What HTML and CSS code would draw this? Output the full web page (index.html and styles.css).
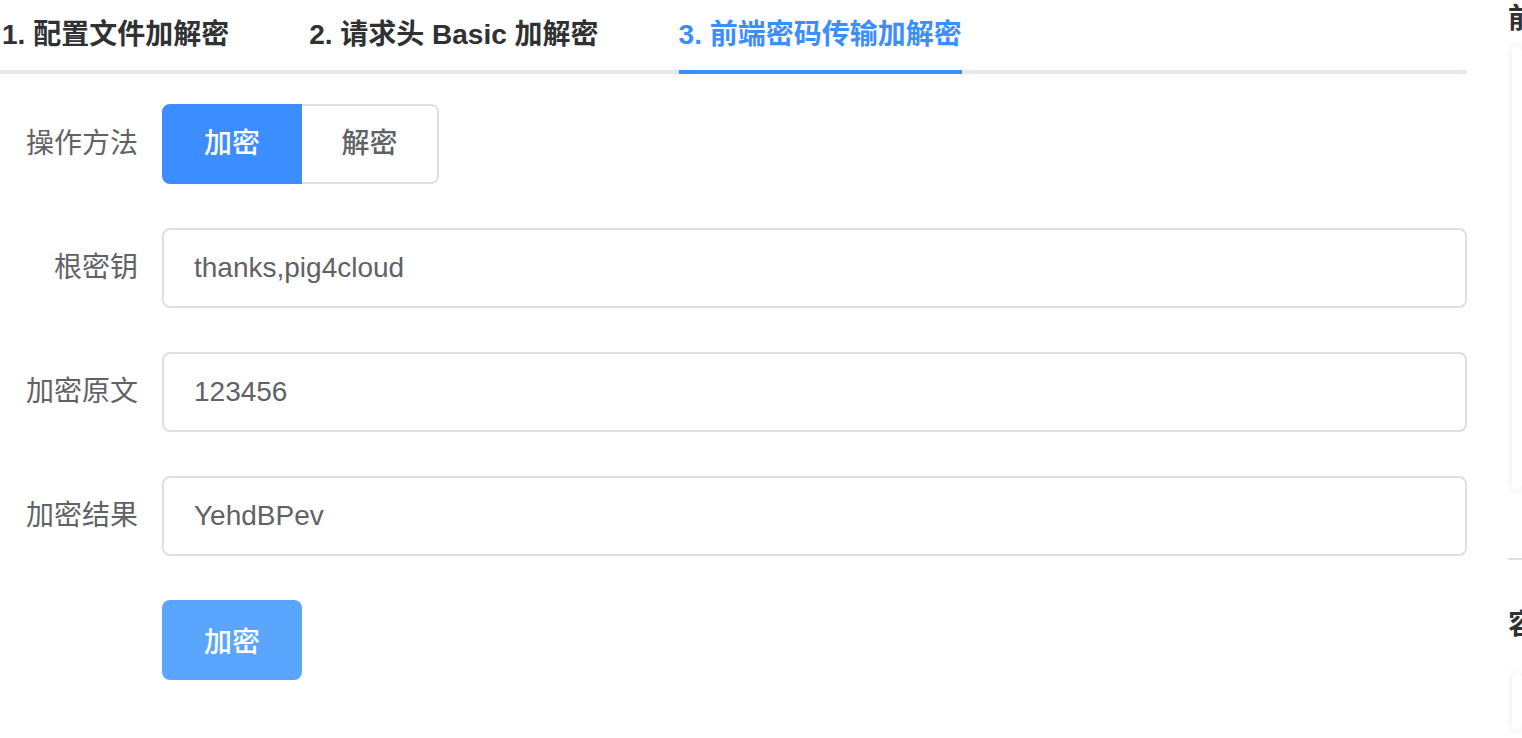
FILE: index.html
```html
<!DOCTYPE html>
<html lang="zh-CN">
<head>
<meta charset="utf-8">
<title>前端密码传输加解密</title>
<link rel="stylesheet" href="styles.css">
</head>
<body>
<div class="page">
  <div class="main">
    <div class="tabs">
      <div class="tab"><span class="tab-label">1. 配置文件加解密</span></div>
      <div class="tab"><span class="tab-label">2. 请求头 Basic 加解密</span></div>
      <div class="tab active"><span class="tab-label">3. 前端密码传输加解密</span></div>
    </div>
    <form class="form">
      <div class="form-item">
        <label class="label">操作方法</label>
        <div class="control">
          <div class="radio-group">
            <span class="radio-btn checked">加密</span>
            <span class="radio-btn">解密</span>
          </div>
        </div>
      </div>
      <div class="form-item">
        <label class="label">根密钥</label>
        <div class="control"><input class="input" type="text" value="thanks,pig4cloud"></div>
      </div>
      <div class="form-item">
        <label class="label">加密原文</label>
        <div class="control"><input class="input" type="text" value="123456"></div>
      </div>
      <div class="form-item">
        <label class="label">加密结果</label>
        <div class="control"><input class="input" type="text" value="YehdBPev"></div>
      </div>
      <div class="form-item last">
        <div class="label"></div>
        <div class="control"><button class="submit" type="button">加密</button></div>
      </div>
    </form>
  </div>
  <div class="side">
    <div class="side-title">前</div>
    <div class="side-box"></div>
    <div class="side-divider"></div>
    <div class="side-title second">容</div>
    <div class="side-box last"></div>
  </div>
</div>
</body>
</html>
```
FILE: styles.css
```css
* { box-sizing: border-box; }
html, body {
  margin: 0;
  padding: 0;
  background: #ffffff;
}
body {
  font-family: "Liberation Sans", "Noto Sans CJK SC", sans-serif;
  overflow: hidden;
  height: 738px;
}
.page {
  display: flex;
  gap: 41px;
  height: 738px;
  overflow: hidden;
}
.main {
  width: 1467px;
  flex: none;
}
.tabs {
  display: flex;
  height: 74px;
  border-bottom: 4px solid #e4e7ed;
}
.tab {
  display: flex;
  height: 74px;
  padding: 0 40px;
  margin-bottom: -4px;
}
.tab:first-child { padding-left: 2px; }
.tab:last-child { padding-right: 0; }
.tab-label {
  display: block;
  font-size: 28px;
  font-weight: 700;
  color: #303133;
  line-height: 70px;
  height: 74px;
  border-bottom: 4px solid transparent;
  white-space: nowrap;
}
.tab.active .tab-label {
  color: #3c8dff;
  border-bottom-color: #3c8dff;
}
.form {
  padding-top: 30px;
}
.form-item {
  display: flex;
  height: 80px;
  margin-bottom: 44px;
}
.form-item.last {
  margin-bottom: 0;
}
.label {
  width: 162px;
  flex: none;
  padding-right: 24px;
  text-align: right;
  line-height: 80px;
  font-size: 28px;
  color: #606266;
}
.control {
  flex: 1;
  display: flex;
  align-items: center;
}
.radio-group {
  display: flex;
}
.radio-btn {
  height: 80px;
  line-height: 76px;
  font-size: 28px;
  font-weight: 500;
  color: #606266;
  text-align: center;
  white-space: nowrap;
  border: 2px solid #dcdfe6;
  background: #fff;
}
.radio-btn:first-child {
  border-radius: 8px 0 0 8px;
  width: 140px;
}
.radio-btn:last-child {
  border-left: 0;
  border-radius: 0 8px 8px 0;
  width: 137px;
}
.radio-btn.checked {
  background: #3c8dff;
  border-color: #3c8dff;
  color: #fff;
}
.input {
  width: 100%;
  height: 80px;
  border: 2px solid #dcdfe6;
  border-radius: 8px;
  padding: 0 30px;
  font-family: "Liberation Sans", "Noto Sans CJK SC", sans-serif;
  font-size: 28px;
  color: #606266;
  background: #fff;
  outline: none;
}
.submit {
  width: 140px;
  height: 80px;
  border: 0;
  border-radius: 8px;
  background: #5aa6ff;
  color: #fff;
  font-family: "Liberation Sans", "Noto Sans CJK SC", sans-serif;
  font-size: 28px;
  font-weight: 500;
  padding: 0;
}
.side {
  flex: 1;
  min-width: 0;
  overflow: hidden;
  padding-top: 2px;
}
.side-title {
  font-size: 28px;
  font-weight: 700;
  color: #303133;
  line-height: 34px;
  white-space: nowrap;
}
.side-title.second {
  margin-top: 48px;
}
.side-box {
  margin-top: 10px;
  margin-left: 4px;
  height: 444px;
  background: #fff;
  border-radius: 8px;
  box-shadow: 0 0 10px rgba(0, 0, 0, 0.1);
}
.side-box.last {
  height: 56px;
  margin-top: 32px;
}
.side-divider {
  margin-top: 68px;
  height: 2px;
  background: #dcdfe6;
}
```
